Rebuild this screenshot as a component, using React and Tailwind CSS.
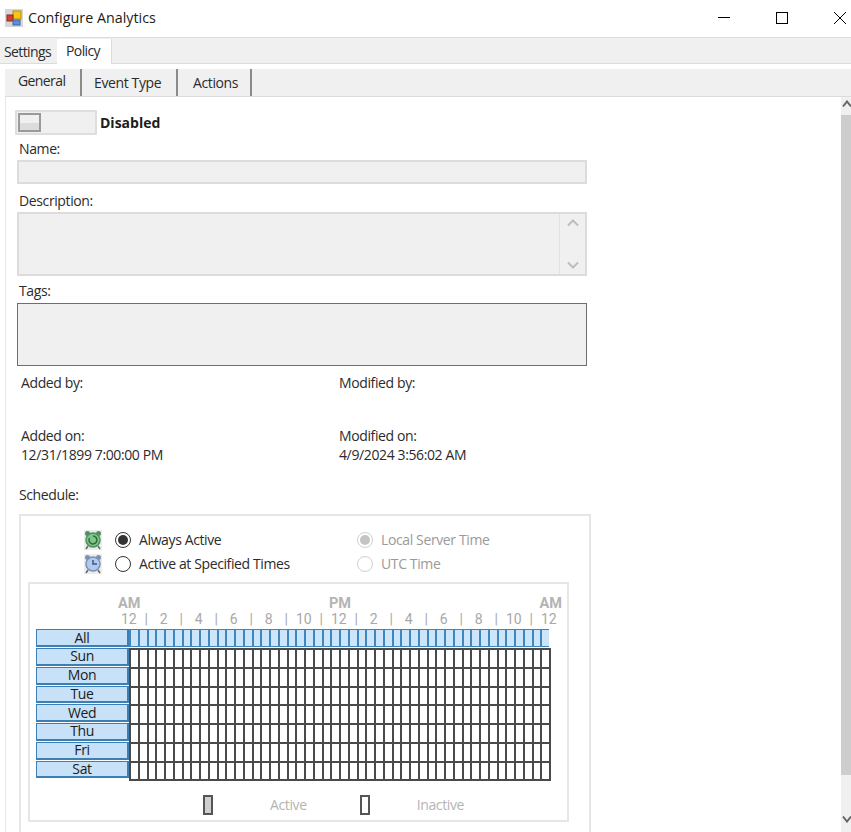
import React from 'react';

const hours = ['12', '|', '2', '|', '4', '|', '6', '|', '8', '|', '10', '|', '12', '|', '2', '|', '4', '|', '6', '|', '8', '|', '10', '|', '12'];
const days = ['Sun', 'Mon', 'Tue', 'Wed', 'Thu', 'Fri', 'Sat'];
const slots = Array.from({ length: 48 }, (_, i) => i);

const AppIcon = () => (
  <svg width="18" height="18" viewBox="0 0 18 18">
    <rect x="0" y="0" width="18" height="18" fill="#d6d6d6" />
    <rect x="8" y="2" width="8" height="8" fill="#f5c518" stroke="#b98a10" />
    <rect x="2" y="6" width="6" height="6" fill="#d8402c" stroke="#8f2a1c" />
    <rect x="8" y="11" width="7" height="5" fill="#5b8fd8" stroke="#3c66a8" />
  </svg>
);

const Clock = ({ face, rim, children }) => (
  <svg width="18" height="20" viewBox="0 0 18 20">
    <rect width="18" height="20" fill="#ececec" />
    <circle cx="3.5" cy="3.5" r="2.5" fill={rim} />
    <circle cx="14.5" cy="3.5" r="2.5" fill={rim} />
    <path d="M4 16l-2 3M14 16l2 3" stroke="#666" strokeWidth="1.5" />
    <circle cx="9" cy="10" r="7" fill={face} stroke={rim} strokeWidth="1.5" />
    {children}
  </svg>
);

const Radio = ({ checked, disabled }) => (
  <span className={`flex h-[16px] w-[16px] items-center justify-center rounded-full border bg-white ${disabled ? 'border-[#cfcfcf]' : 'border-[#333333]'}`}>
    {checked && <span className={`h-[10px] w-[10px] rounded-full ${disabled ? 'bg-[#c4c4c4]' : 'bg-[#333333]'}`} />}
  </span>
);

const Field = ({ className, children }) => (
  <div className={`w-[570px] border-2 border-[#dcdcdc] bg-[#f0f0f0] ${className}`}>{children}</div>
);

export default function App() {
  return (
    <div className="h-[832px] w-[851px] overflow-hidden bg-white text-[14px] leading-[18px] tracking-[-0.38px] text-[#2b2b2b] font-['Open_Sans','Noto_Sans',sans-serif]">
      <div className="flex h-[38px] items-center border-b border-[#dcdcdc] pb-[2px] pl-[5px]">
        <AppIcon />
        <span className="ml-[5px] text-[14.3px] tracking-normal text-[#1c1c1c]">Configure Analytics</span>
        <div className="ml-auto mr-[5px] flex items-center gap-[46px]">
          <span className="h-px w-[12px] bg-black" />
          <span className="h-[12px] w-[12px] border border-black" />
          <svg width="12" height="12" viewBox="0 0 12 12"><path d="M0 0l12 12M12 0L0 12" stroke="#000" strokeWidth="1" /></svg>
        </div>
      </div>

      <div className="flex h-[26px] border-b border-[#dcdcdc] bg-[#f0f0f0]">
        <div className="w-[57px] pl-[4px] pt-[5px] tracking-[-0.6px]">Settings</div>
        <div className="mt-px h-[25px] w-[55px] border-r border-[#dcdcdc] bg-white pl-[9px] pt-[3px] tracking-[-0.6px]">Policy</div>
      </div>

      <div className="h-[5px]" />

      <div className="ml-[5px] flex h-[28px] border-b border-[#dcdcdc] bg-[#f0f0f0]">
        <div className="h-[27px] w-[77px] border-r-2 border-[#8a8a8a] pl-[13px] pt-[3px] tracking-[-0.6px]">General</div>
        <div className="h-[27px] w-[96px] border-r-2 border-[#8a8a8a] pl-[12px] pt-[5px]">Event Type</div>
        <div className="h-[27px] w-[74px] border-r-2 border-[#8a8a8a] pl-[15px] pt-[5px]">Actions</div>
      </div>

      <div className="flex h-[735px]">
        <div className="ml-[5px] flex-1 border-l border-[#e6e6e6] pl-[9px]">
          <div className="mt-[13px] flex items-center">
            <div className="flex h-[25px] w-[82px] items-center rounded-[1px] border-2 border-[#dedede] bg-[#f0f0f0] pl-[1px]">
              <div className="flex h-[19px] w-[23px] items-end border-2 border-[#9a9a9a] bg-[#f0f0f0]">
                <div className="h-[7px] w-full bg-[#dcdcdc]" />
              </div>
            </div>
            <span className="ml-[3px] font-bold tracking-normal text-[#1c1c1c]">Disabled</span>
          </div>

          <div className="ml-[4px] mt-[5px]">Name:</div>
          <Field className="ml-[2px] mt-[2px] h-[24px]" />

          <div className="ml-[4px] mt-[8px]">Description:</div>
          <Field className="ml-[2px] mt-[2px] flex h-[64px] justify-end">
            <div className="flex w-[26px] flex-col items-center justify-between border-l border-[#e2e2e2] py-[5px]">
              <svg width="12" height="8" viewBox="0 0 12 8"><path d="M1 6.500l5-5 5 5" fill="none" stroke="#bdbdbd" strokeWidth="2" /></svg>
              <svg width="12" height="8" viewBox="0 0 12 8"><path d="M1 1.500l5 5 5-5" fill="none" stroke="#bdbdbd" strokeWidth="2" /></svg>
            </div>
          </Field>

          <div className="ml-[4px] mt-[6px]">Tags:</div>
          <div className="ml-[2px] mt-[3px] h-[63px] w-[570px] border border-[#6e6e6e] bg-[#f0f0f0]" />

          <div className="ml-[6px] mt-[8px] grid w-[560px] grid-cols-[318px_1fr]">
            <div>
              <div className="h-[53px]">Added by:</div>
              <div className="h-[19px]">Added on:</div>
              <div>12/31/1899 7:00:00 PM</div>
            </div>
            <div>
              <div className="h-[53px]">Modified by:</div>
              <div className="h-[19px]">Modified on:</div>
              <div>4/9/2024 3:56:02 AM</div>
            </div>
          </div>

          <div className="ml-[4px] mt-[22px]">Schedule:</div>

          <div className="ml-[4px] mt-[10px] h-[330px] w-[572px] border-2 border-[#e6e6e6]">
            <div className="flex h-[66px] pt-[14px]">
              <div className="ml-[63px] flex flex-col gap-[4px]">
                <Clock face="#7fc48a" rim="#4f8f5f">
                  <path d="M9 6a4 4 0 1 1-3.500 2" fill="none" stroke="#2d6b3a" strokeWidth="1.500" />
                </Clock>
                <Clock face="#b4c9ee" rim="#7d8fb5">
                  <path d="M9 6v4h4" fill="none" stroke="#3d5688" strokeWidth="1.500" />
                </Clock>
              </div>
              <div className="ml-[13px] flex w-[242px] flex-col gap-[6px] pt-[1px]">
                <div className="flex items-center gap-[8px]"><Radio checked /><span>Always Active</span></div>
                <div className="flex items-center gap-[8px]"><Radio /><span>Active at Specified Times</span></div>
              </div>
              <div className="flex flex-col gap-[6px] pt-[1px] text-[#9a9a9a]">
                <div className="flex items-center gap-[8px]"><Radio checked disabled /><span>Local Server Time</span></div>
                <div className="flex items-center gap-[8px]"><Radio disabled /><span>UTC Time</span></div>
              </div>
            </div>

            <div className="ml-[7px] h-[240px] w-[541px] border-2 border-[#e6e6e6] pl-[6px]">
              <div className="ml-[82px] mt-[11px] flex h-[17px] w-[444px] items-center justify-between font-['Roboto',sans-serif] text-[14.5px] font-bold leading-[17px] tracking-normal text-[#b4b4b4]">
                <span>AM</span><span>PM</span><span>AM</span>
              </div>
              <div className="ml-[84px] flex h-[15px] font-['Roboto',sans-serif] leading-[15px] tracking-normal text-[#a8a8a8]">
                {hours.map((h, i) => (
                  <span key={i} className="flex w-[17.5px] shrink-0 justify-center whitespace-nowrap">{h}</span>
                ))}
              </div>

              <div className="mt-[2px] flex">
                <div className="mb-px flex h-[18px] w-[93px] items-center justify-center border border-b-2 border-r-2 border-[#3b7fb5] bg-[#c6e1f8] text-[#1c1c1c]">All</div>
                <div className="flex h-[18px] w-[420px]">
                  {slots.map((s) => (
                    <div key={s} className="flex-1 border-y border-l-2 border-[#3f86bc] bg-[#cde5fa]" />
                  ))}
                </div>
              </div>

              <div className="flex">
                <div className="flex w-[93px] flex-col">
                  {days.map((d) => (
                    <div key={d} className="mb-px flex h-[17.750px] items-center justify-center border border-b-2 border-r-2 border-[#3b7fb5] bg-[#c6e1f8] text-[#1c1c1c]">{d}</div>
                  ))}
                </div>
                <div className="flex w-[422px] flex-col border-b-2 border-r-2 border-[#4a4a4a]">
                  {days.map((d) => (
                    <div key={d} className="flex h-[18.750px] border-t-2 border-[#4a4a4a]">
                      {slots.map((s) => (
                        <div key={s} className="flex-1 border-l-2 border-[#4a4a4a]" />
                      ))}
                    </div>
                  ))}
                </div>
              </div>

              <div className="mt-[14px] flex h-[20px] items-center text-[#b4b4b4]">
                <span className="ml-[167px] h-[20px] w-[10px] border-2 border-[#555555] bg-[#cfcfcf]" />
                <span className="ml-[57px]">Active</span>
                <span className="ml-[53px] h-[20px] w-[10px] border-2 border-[#555555] bg-white" />
                <span className="ml-[47px]">Inactive</span>
              </div>
            </div>
          </div>
        </div>

        <div className="flex w-[10px] flex-col bg-[#f0f0f0]">
          <div className="h-[18px] overflow-hidden pl-[1px] pt-[3px]">
            <svg width="9" height="8" viewBox="0 0 9 8"><path d="M1 6.500l4-5 4 5" fill="none" stroke="#666" strokeWidth="2" /></svg>
          </div>
          <div className="h-[660px] bg-[#cdcdcd]" />
          <div className="mt-[40px] pl-[1px]">
            <svg width="9" height="8" viewBox="0 0 9 8"><path d="M1 1.500l4 5 4-5" fill="none" stroke="#666" strokeWidth="2" /></svg>
          </div>
        </div>
      </div>
    </div>
  );
}
